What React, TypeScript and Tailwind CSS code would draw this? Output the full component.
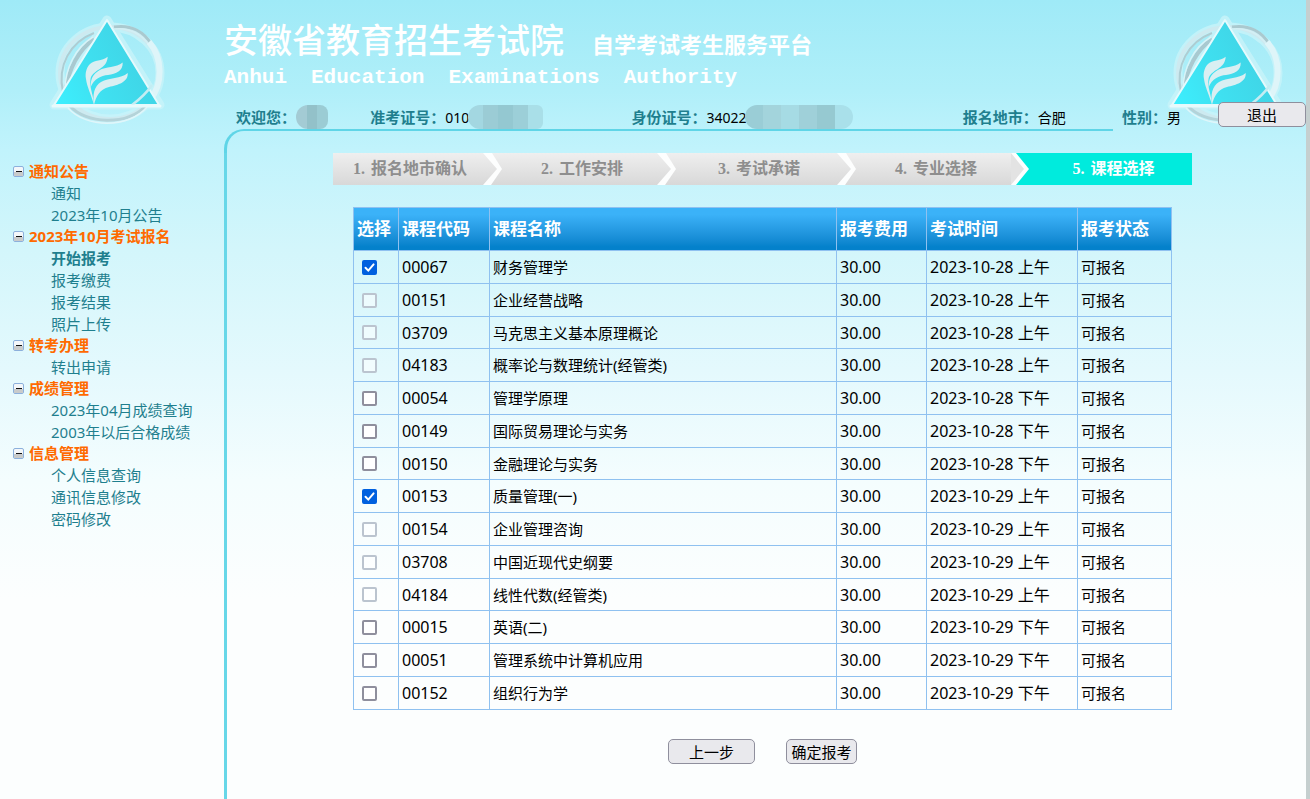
import { useState } from "react";

type MenuGroup = { title: string; items: string[] };

type Course = { code: string; name: string; time: string };

const menu: MenuGroup[] = [
  { title: "通知公告", items: ["通知", "2023年10月公告"] },
  { title: "2023年10月考试报名", items: ["开始报考", "报考缴费", "报考结果", "照片上传"] },
  { title: "转考办理", items: ["转出申请"] },
  { title: "成绩管理", items: ["2023年04月成绩查询", "2003年以后合格成绩"] },
  { title: "信息管理", items: ["个人信息查询", "通讯信息修改", "密码修改"] },
];

const steps = ["报名地市确认", "工作安排", "考试承诺", "专业选择", "课程选择"];

const courses: Course[] = [
  { code: "00067", name: "财务管理学", time: "2023-10-28 上午" },
  { code: "00151", name: "企业经营战略", time: "2023-10-28 上午" },
  { code: "03709", name: "马克思主义基本原理概论", time: "2023-10-28 上午" },
  { code: "04183", name: "概率论与数理统计(经管类)", time: "2023-10-28 上午" },
  { code: "00054", name: "管理学原理", time: "2023-10-28 下午" },
  { code: "00149", name: "国际贸易理论与实务", time: "2023-10-28 下午" },
  { code: "00150", name: "金融理论与实务", time: "2023-10-28 下午" },
  { code: "00153", name: "质量管理(一)", time: "2023-10-29 上午" },
  { code: "00154", name: "企业管理咨询", time: "2023-10-29 上午" },
  { code: "03708", name: "中国近现代史纲要", time: "2023-10-29 上午" },
  { code: "04184", name: "线性代数(经管类)", time: "2023-10-29 上午" },
  { code: "00015", name: "英语(二)", time: "2023-10-29 下午" },
  { code: "00051", name: "管理系统中计算机应用", time: "2023-10-29 下午" },
  { code: "00152", name: "组织行为学", time: "2023-10-29 下午" },
];

const buttonClass =
  "h-[25px] rounded-[5px] border border-[#8f8f9d] bg-[#e9e9ed] text-[15px] leading-[22px] text-black hover:bg-[#d0d0d7]";

function Logo({ id }: { id: string }) {
  return (
    <svg viewBox="0 0 120 120" className="h-[120px] w-[120px]" aria-hidden="true">
      <defs>
        <linearGradient id={`${id}-tri`} x1="0" y1="1" x2="1" y2="0.6">
          <stop offset="0" stopColor="#3cf0ff" />
          <stop offset="0.45" stopColor="#3fe0f0" />
          <stop offset="1" stopColor="#40d2e4" />
        </linearGradient>
      </defs>
      {/* soft halo */}
      <g fill="none" stroke="#c9f4fa" strokeLinejoin="round" opacity="0.8">
        <ellipse cx="62" cy="65" rx="50" ry="46" strokeWidth="9" />
        <path d="M59 12 L112 97 H6 Z" strokeWidth="9" />
      </g>
      {/* ring */}
      <ellipse cx="62" cy="65" rx="50" ry="46" fill="none" stroke="#cdeaf0" strokeWidth="4" />
      <path d="M46 25 C22 34 9 58 15 84" fill="none" stroke="#aecdd3" strokeWidth="2" />
      <path d="M46 31 C30 42 21 62 18 80" fill="none" stroke="#a9c9d0" strokeWidth="4" />
      <path d="M45 29 C28 39 17 60 17 82" fill="none" stroke="#d9f3f7" strokeWidth="1.5" />
      <path d="M66 19 C84 16 97 25 103 36" fill="none" stroke="#aac9cf" strokeWidth="3" />
      <path d="M66 21 C82 19 94 27 101 37" fill="none" stroke="#d3eff4" strokeWidth="1.5" />
      <path d="M101 34 C115 50 115 76 102 92" fill="none" stroke="#def5f9" strokeWidth="6" />
      <path d="M22 98 C38 116 78 118 98 98" fill="none" stroke="#b4d3d9" strokeWidth="3" />
      <path d="M20 100 C38 120 80 121 99 99" fill="none" stroke="#e0f6fa" strokeWidth="1.5" />
      {/* triangle */}
      <path d="M59 12 L111 97 H6 Z" fill={`url(#${id}-tri)`} stroke="#e4fafd" strokeWidth="2" strokeLinejoin="round" />
      <path d="M104 77 C98 86 92 91 84 97" fill="none" stroke="#c4edf3" strokeWidth="2.5" />
      <path d="M5 98 H112" stroke="#e8fafc" strokeWidth="3" strokeLinecap="round" />
      {/* flame */}
      <g fill="#d9eff2">
        <path d="M59.7 48.7 C54 53 46 52 42 56 C38 60 37 66 38 71 C39 79 43 86 46 97 C46 88 41 80 42.5 71 C44.5 61 59 62 59.7 48.7 Z" />
        <path d="M74.7 54.5 C68 60 58 58 51 62.5 C45 66 42.5 71 42.7 79 C46 71 53 67.5 60 67 C68 66 75 63 74.7 54.5 Z" />
        <path d="M79.7 65 C73 71 61 69.5 53 74 C46 78 44.5 87 46 97 C48 88 52 81 61 79 C70 77 80.5 74 79.7 65 Z" />
      </g>
    </svg>
  );
}

function Toggle() {
  return (
    <svg viewBox="0 0 11 11" className="h-[11px] w-[11px]" aria-hidden="true">
      <rect x="0.5" y="0.5" width="10" height="10" rx="1.5" fill="#f4f7fa" stroke="#8cb0dc" />
      <rect x="1" y="6" width="9" height="4" fill="#c9cbcb" />
      <rect x="3" y="5" width="6" height="1" fill="#111" />
    </svg>
  );
}

/* white chevron that joins two steps */
function Chevron({ last }: { last: boolean }) {
  return (
    <svg viewBox="0 0 20 32" preserveAspectRatio="none" className="h-full w-5 shrink-0" aria-hidden="true">
      {last && <path d="M0 0 H20 V32 H0 Z" fill="#00ebdd" />}
      {last && <path d="M0 0 H5 L18 16 L5 32 H0 Z" fill="#fdfefe" />}
      {last && <path d="M0 0 L13 16 L0 32 Z" fill="#e3e3e3" />}
      {!last && <path d="M0 0 H9 L19 16 L8 32 H0 L14 16 Z" fill="#fdfefe" />}
    </svg>
  );
}

function Mask({ className, tiles }: { className: string; tiles: string[] }) {
  return (
    <span aria-hidden="true" className={`grid h-6 grid-flow-col overflow-hidden rounded-l-xl ${className}`}>
      {tiles.map((tile, i) => (
        <span key={i} className={tile} />
      ))}
    </span>
  );
}

function Field({ label, value, children }: { label: string; value?: string; children?: React.ReactNode }) {
  return (
    <div className="flex h-[25px] items-center pt-px whitespace-nowrap">
      <dt className="text-[15px] font-bold text-[#1f7f8e]">{label}：</dt>
      <dd className="flex items-center text-[14px] text-black">
        {value}
        {children}
      </dd>
    </div>
  );
}

function Header() {
  return (
    <header className="flex h-[129px]">
      <div className="w-[224px] shrink-0 pt-2 pl-12">
        <Logo id="left" />
      </div>
      <div className="relative flex min-w-0 flex-1 flex-col">
        <div className="absolute top-2 right-5">
          <Logo id="right" />
        </div>
        <div className="flex items-baseline gap-7 pt-4 whitespace-nowrap text-white">
          <h1 className="text-[34px] leading-[48px] font-medium">安徽省教育招生考试院</h1>
          <h2 className="text-[22px] font-bold">自学考试考生服务平台</h2>
        </div>
        <p className="flex gap-6 font-['Liberation_Mono',monospace] text-[21px] leading-[28px] font-bold text-white">
          <span>Anhui</span>
          <span>Education</span>
          <span>Examinations</span>
          <span>Authority</span>
        </p>
        <div className="relative mt-2.5 flex h-[25px] pl-3">
          <dl className="grid flex-1 grid-cols-[134fr_261fr_331fr_159fr_96fr] pt-0.5">
            <Field label="欢迎您">
              <Mask className="w-8 rounded-r-lg" tiles={["bg-[#a3cbd4]", "bg-[#93c1c9]", "bg-[#9bccd4]"]} />
            </Field>
            <Field label="准考证号" value="010">
              <Mask
                className="-ml-px w-[75px] rounded-r-md"
                tiles={["bg-[#a3d7e1]", "bg-[#9bccd5]", "bg-[#94c8d1]", "bg-[#9ccfd8]", "bg-[#a9dfe8]"]}
              />
            </Field>
            <Field label="身份证号" value="34022">
              <Mask
                className="-ml-px w-[108px] rounded-r-xl"
                tiles={["bg-[#9acdd6]", "bg-[#a3d4dc]", "bg-[#a6dbe4]", "bg-[#9fd0d9]", "bg-[#96c9d1]", "bg-[#a9e0ea]"]}
              />
            </Field>
            <Field label="报名地市" value="合肥" />
            <Field label="性别" value="男" />
          </dl>
          <button type="button" className={`w-[88px] ${buttonClass}`}>
            退出
          </button>
        </div>
      </div>
    </header>
  );
}

function Sidebar() {
  const [active, setActive] = useState("开始报考");

  return (
    <nav className="w-[224px] shrink-0 pt-8 text-[15px] whitespace-nowrap">
      {menu.map((group) => (
        <section key={group.title}>
          <h3 className="flex h-[21px] items-center gap-[5px] pl-[13px] font-bold text-[#ff6a00]">
            <Toggle />
            {group.title}
          </h3>
          <ul className="pl-[51px]">
            {group.items.map((item) => (
              <li key={item} className="h-[22px] leading-[22px]">
                <a
                  href="#"
                  onClick={() => setActive(item)}
                  className={`text-[#1f7f8e] hover:underline ${item === active ? "font-bold" : ""}`}
                >
                  {item}
                </a>
              </li>
            ))}
          </ul>
        </section>
      ))}
    </nav>
  );
}

function Steps() {
  return (
    <ol className="mx-auto grid h-[31px] max-w-[859px] grid-cols-[170fr_174fr_180fr_174fr_161fr] font-['Liberation_Serif','Noto_Sans_CJK_SC',serif] text-[16px] font-bold">
      {steps.map((step, i) => {
        const current = i === steps.length - 1;
        return (
          <li
            key={step}
            className={`flex items-center whitespace-nowrap ${
              current ? "bg-[#00ebdd] text-white" : "bg-linear-to-b from-[#efefef] to-[#d8d8d8] text-[#8e8e8e]"
            }`}
          >
            <span className="flex flex-1 justify-center gap-1.5 pl-1">
              <span>{i + 1}.</span>
              <span>{step}</span>
            </span>
            {!current && <Chevron last={i === steps.length - 2} />}
          </li>
        );
      })}
    </ol>
  );
}

function CourseTable() {
  const [selected, setSelected] = useState<string[]>(["00067", "00153"]);

  const toggle = (code: string) => {
    setSelected((prev) => (prev.includes(code) ? prev.filter((c) => c !== code) : [...prev, code]));
  };

  // Only one course can be taken in each exam session
  const takenTimes = courses.filter((c) => selected.includes(c.code)).map((c) => c.time);

  return (
    <table className="mx-auto mt-[23px] w-full max-w-[819px] table-fixed border-collapse text-left text-black [&_td]:border [&_td]:border-[#8fc1f0] [&_td]:px-[3px] [&_td]:py-0 [&_th]:border [&_th]:border-[#8fc1f0] [&_th]:px-[3px]">
      <colgroup>
        <col className="w-[45px]" />
        <col className="w-[91px]" />
        <col />
        <col className="w-[90px]" />
        <col className="w-[151px]" />
        <col className="w-[94px]" />
      </colgroup>
      <thead>
        <tr className="h-[43px] bg-linear-to-b from-[#3bb2f8] from-15% to-[#0481cb] to-90% text-[17px] whitespace-nowrap text-white">
          <th>选择</th>
          <th>课程代码</th>
          <th>课程名称</th>
          <th>报考费用</th>
          <th>考试时间</th>
          <th>报考状态</th>
        </tr>
      </thead>
      <tbody>
        {courses.map((course) => {
          const checked = selected.includes(course.code);
          const disabled = !checked && takenTimes.includes(course.time);
          return (
            <tr key={course.code} className="h-[33px] text-[16px] leading-6 [&:nth-child(4n+3)]:h-8">
              <td>
                <span className="relative ml-[5px] block h-[15px] w-[15px]">
                  <input
                    type="checkbox"
                    aria-label={course.name}
                    checked={checked}
                    disabled={disabled}
                    onChange={() => toggle(course.code)}
                    className="block h-[15px] w-[15px] appearance-none rounded-[2px] border-2 border-[#8f8f9d] bg-white checked:border-[#0060df] checked:bg-[#0060df] disabled:border-[#bbc4cf] disabled:bg-white/50"
                  />
                  {checked && (
                    <svg viewBox="0 0 15 15" className="pointer-events-none absolute inset-0" aria-hidden="true">
                      <path d="M3.5 7.8 L6.3 10.6 L11.6 4.4" fill="none" stroke="#fff" strokeWidth="2" strokeLinecap="round" />
                    </svg>
                  )}
                </span>
              </td>
              <td>{course.code}</td>
              <td className="text-[15px]">{course.name}</td>
              <td>30.00</td>
              <td className="whitespace-nowrap">{course.time}</td>
              <td className="text-[15px]">可报名</td>
            </tr>
          );
        })}
      </tbody>
    </table>
  );
}

export default function App() {
  return (
    <div className="min-h-screen border-r-4 border-[#c5cfcf] bg-[linear-gradient(to_bottom,#9feaf7_0px,#b0eff9_90px,#c1f3fc_150px,#d3f6fb_250px,#e4f9fd_370px,#f4fdfe_480px,#fcfefe_600px)] font-['Noto_Sans','Noto_Sans_CJK_SC',sans-serif]">
      <Header />
      <div className="flex">
        <Sidebar />
        <main className="flex min-h-[670px] min-w-0 flex-1 flex-col">
          <div className="mr-[193px] h-6 rounded-tl-[20px] border-t-2 border-l-[3px] border-[#5fd5e7]" />
          <div className="flex-1 border-l-[3px] border-[#67d7e8] pr-2">
            <Steps />
            <CourseTable />
            <div className="mt-[29px] flex justify-center gap-[31px]">
              <button type="button" className={`w-[87px] ${buttonClass}`}>
                上一步
              </button>
              <button type="button" className={`w-[71px] ${buttonClass}`}>
                确定报考
              </button>
            </div>
          </div>
        </main>
      </div>
    </div>
  );
}
